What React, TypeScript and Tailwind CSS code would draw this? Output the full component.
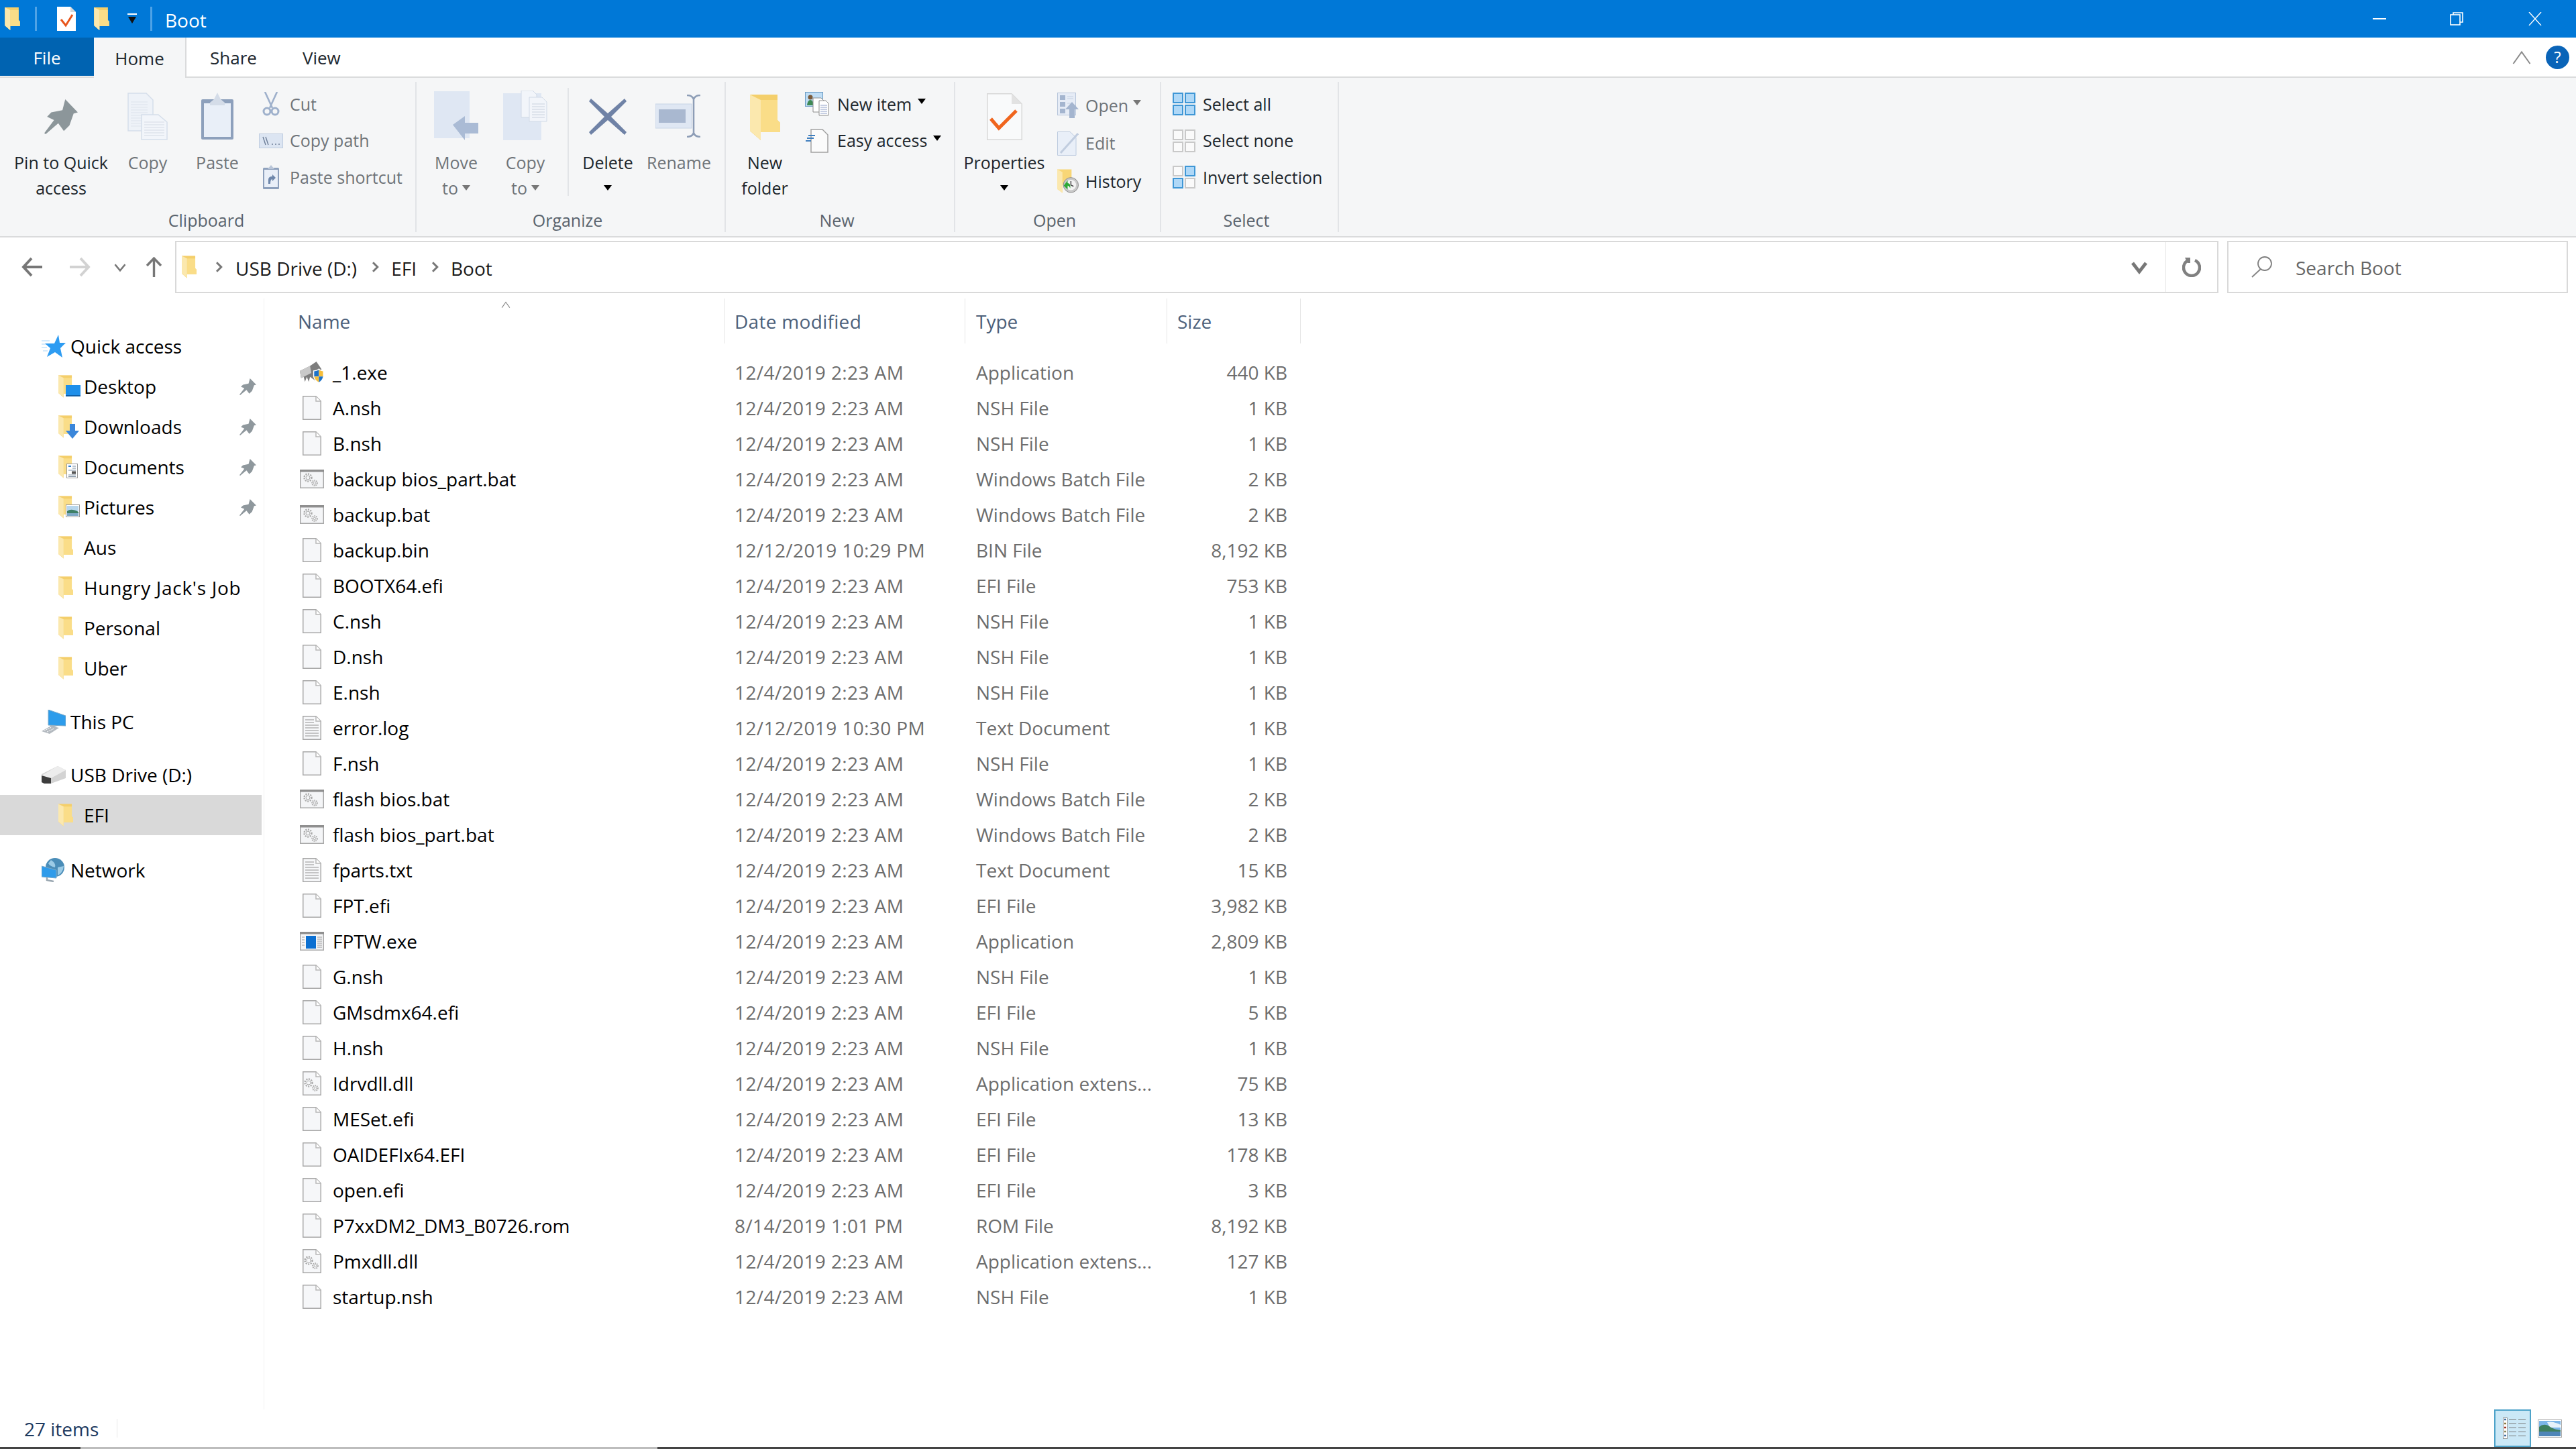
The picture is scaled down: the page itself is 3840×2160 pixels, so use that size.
import type { ReactNode } from 'react';

function Folder({ className }: { className: string }) {
  return (
    <svg viewBox="0 0 45 68" className={className}>
      <path d="M0 0H41V38L45 42V56H16V68L0 54Z" fill="#F8D676" />
      <path d="M16 8H41V38L45 42V56H16Z" fill="#FADD88" />
      <path d="M0 0H41V8H16V68L0 54Z" fill="#F1C964" opacity="0.6" />
      <path d="M0 0L16 8V68L0 54Z" fill="#FBE8AE" />
    </svg>
  );
}

function BlankDoc({ lines }: { lines?: boolean }) {
  return (
    <svg viewBox="0 0 28 36" className="w-[28px] h-[36px]">
      <path d="M.75.75H20L27.25 8V35.25H.75Z" fill="#F6F7F9" stroke="#A8A8A8" strokeWidth="1.5" />
      <path d="M20 1V8H27" fill="#FFFFFF" stroke="#B8B8B8" strokeWidth="1.5" />
      {lines && (
        <path d="M4 6H17M4 10H17M4 14H24M4 18H24M4 22H24M4 26H24M4 30H24" stroke="#B4B4B4" strokeWidth="1.3" />
      )}
    </svg>
  );
}

function Gears({ x, y }: { x: number; y: number }) {
  return (
    <g transform={`translate(${x} ${y})`} fill="none" stroke="#A9A9A9">
      <circle cx="7" cy="6" r="5.5" strokeWidth="2.4" strokeDasharray="2 1.6" />
      <circle cx="7" cy="6" r="3" strokeWidth="1" />
      <circle cx="17" cy="14" r="3.8" strokeWidth="2" strokeDasharray="1.6 1.2" />
      <circle cx="17" cy="14" r="1.8" strokeWidth="0.8" />
    </g>
  );
}

function BatIcon() {
  return (
    <svg viewBox="0 0 36 28" className="w-[36px] h-[28px]">
      <rect x=".75" y=".75" width="34.5" height="26.5" fill="#F4F5F7" stroke="#A8A8A8" strokeWidth="1.5" />
      <rect x="0" y="0" width="36" height="3.5" fill="#8F8F8F" />
      <Gears x={5} y={6} />
    </svg>
  );
}

function DllIcon() {
  return (
    <svg viewBox="0 0 28 36" className="w-[28px] h-[36px]">
      <path d="M.75.75H20L27.25 8V35.25H.75Z" fill="#F6F7F9" stroke="#A8A8A8" strokeWidth="1.5" />
      <path d="M20 1V8H27" fill="#FFFFFF" stroke="#B8B8B8" strokeWidth="1.5" />
      <Gears x={2} y={11} />
    </svg>
  );
}

function AppIcon() {
  return (
    <svg viewBox="0 0 36 28" className="w-[36px] h-[28px]">
      <rect x=".75" y=".75" width="34.5" height="26.5" fill="#F4F5F7" stroke="#A8A8A8" strokeWidth="1.5" />
      <rect x="0" y="0" width="36" height="3.5" fill="#8F8F8F" />
      <rect x="9" y="6" width="15" height="19" fill="#0B6FD1" />
      <path d="M3 8H7M3 12H7M3 16H7M3 20H7M26 8H33M26 11H33M26 14H33M26 17H33M26 20H33M26 23H33" stroke="#9A9A9A" strokeWidth="1.2" />
    </svg>
  );
}

function ExeIcon() {
  return (
    <svg viewBox="0 0 38 34" className="w-[38px] h-[34px]">
      <path d="M0 15L16 7L26 0L34 12L32 24L24 30L16 24L14 32L11 24L8 32L6 24L2 26Z" fill="#7D7D7D" />
      <path d="M0 15L16 7L18 18L8 23L2 26Z" fill="#C9C9C9" />
      <path d="M21 14Q27 14 30 11Q33 14 38 14V24Q36 31 30 34Q23 31 21 24Z" fill="#FFFFFF" />
      <path d="M22.5 15.5Q27 15 30 13V23.5H22.5Z" fill="#1C72C9" />
      <path d="M30 13Q33 15 36.5 15.5V23.5H30Z" fill="#F6BE3A" />
      <path d="M22.5 23.5H30V32.5Q24 30 22.5 23.5Z" fill="#F6BE3A" />
      <path d="M30 23.5H36.5Q35 30 30 32.5Z" fill="#1C72C9" />
    </svg>
  );
}

function PinIcon({ className, color }: { className: string; color: string }) {
  return (
    <svg viewBox="0 0 24 32" preserveAspectRatio="none" className={className}>
      <path d="M15 0L24 12L21 13L18 24L14 29L10 22L1 32L0 31L7 19L2 16L5 12L13 10Z" fill={color} />
    </svg>
  );
}

function Caret({ color = '#000000' }: { color?: string }) {
  return (
    <svg viewBox="0 0 12 8" className="w-[12px] h-[8px]">
      <path d="M0 0H12L6 8Z" fill={color} />
    </svg>
  );
}

function Chevron({ className, d, color, width }: { className: string; d: string; color: string; width: number }) {
  return (
    <svg viewBox="0 0 24 24" className={className} fill="none" stroke={color} strokeWidth={width}>
      <path d={d} />
    </svg>
  );
}

function CopyIcon() {
  return (
    <svg viewBox="0 0 60 71" className="w-[60px] h-[71px]">
      <path d="M1 1H28L38 11V57H1Z" fill="#EEF2F8" stroke="#D5DEEA" strokeWidth="1.5" />
      <path d="M5 14H30M5 18H30M5 22H30M5 26H30M5 30H30M5 34H30M5 38H30M5 42H22M5 46H22M5 50H22" stroke="#DDE3EC" />
      <path d="M21 33H46L59 44V70H21Z" fill="#F2F5FA" stroke="#D5DEEA" strokeWidth="1.5" />
      <path d="M25 44H55M25 48H55M25 52H55M25 56H55M25 60H55M25 64H55" stroke="#D5DBE5" />
    </svg>
  );
}

function PasteIcon() {
  return (
    <svg viewBox="0 0 50 72" className="w-[50px] h-[72px]">
      <rect x="1" y="11" width="48" height="60" rx="2" fill="#8DA0BC" />
      <rect x="5" y="17" width="40" height="50" fill="#E9EFF8" />
      <path d="M14 16L20 11L25 1L30 11L36 16V20H14Z" fill="#D4DCE8" />
    </svg>
  );
}

function CutIcon() {
  return (
    <svg viewBox="0 0 26 36" className="w-[26px] h-[36px]" fill="none" stroke="#9EB0CB">
      <path d="M4 0L15 24M22 0L11 24" strokeWidth="2.6" />
      <circle cx="7" cy="29" r="5" strokeWidth="3" />
      <circle cx="19" cy="29" r="5" strokeWidth="3" />
    </svg>
  );
}

function CopyPathIcon() {
  return (
    <svg viewBox="0 0 36 22" className="w-[36px] h-[22px]">
      <rect x=".5" y=".5" width="35" height="21" fill="#DCE5F2" stroke="#BFCDE0" />
      <path d="M6 5L10 17M10 5L14 17" stroke="#6E7F98" strokeWidth="1.4" />
      <path d="M19 16H21M24 16H26M29 16H31" stroke="#6E7F98" strokeWidth="1.6" />
    </svg>
  );
}

function PasteShortcutIcon() {
  return (
    <svg viewBox="0 0 26 36" className="w-[26px] h-[36px]">
      <rect x="1" y="4" width="24" height="32" rx="1.5" fill="#8DA0BC" />
      <rect x="3" y="7" width="20" height="26" fill="#E9EFF8" />
      <path d="M8 6L13 0L18 6Z" fill="#B9C5D8" />
      <path d="M9 28V22Q9 17 15 17V14L20 19L15 24V21Q12 21 12 28Z" fill="#6E87AB" />
    </svg>
  );
}

function MoveToIcon() {
  return (
    <svg viewBox="0 0 66 73" className="w-[66px] h-[73px]">
      <rect x="0" y="0" width="53" height="70" fill="#DFE7F3" />
      <path d="M28 50L46 37V47H66V63H46V73Z" fill="#AABBD5" />
    </svg>
  );
}

function CopyToIcon() {
  return (
    <svg viewBox="0 0 66 74" className="w-[66px] h-[74px]">
      <path d="M0 4H57V50L57 74H0Z" fill="#DFE7F3" />
      <path d="M27 0H44L50 6V40H27Z" fill="#F2F5FA" stroke="#D0D9E6" />
      <path d="M39 10H58L65 17V46H39Z" fill="#F2F5FA" stroke="#D0D9E6" />
      <path d="M43 20H62M43 24H62M43 28H62M43 32H62M43 36H62M43 40H62" stroke="#CAD2DE" />
    </svg>
  );
}

function DeleteIcon() {
  return (
    <svg viewBox="0 0 58 58" className="w-[58px] h-[58px]">
      <path d="M4 2L29 24L54 2L57 6L34 29L57 52L54 56L29 34L4 56L1 52L24 29L1 6Z" fill="#6F82A6" />
    </svg>
  );
}

function RenameIcon() {
  return (
    <svg viewBox="0 0 70 64" className="w-[70px] h-[64px]">
      <rect x="0" y="14" width="54" height="36" fill="#DFE7F3" stroke="#C8D4E6" />
      <rect x="5" y="22" width="40" height="20" fill="#A9B8D0" />
      <path d="M47 1Q55 1 57 7V57Q55 63 47 63M67 1Q59 1 57 7M57 57Q59 63 67 63" fill="none" stroke="#8D9DB6" strokeWidth="2.5" />
    </svg>
  );
}

function NewItemIcon() {
  return (
    <svg viewBox="0 0 36 36" className="w-[36px] h-[36px]">
      <rect x=".5" y=".5" width="26" height="21" fill="#BFDDF5" stroke="#6B9CC4" />
      <circle cx="8" cy="8" r="3.5" fill="#7A5B3B" />
      <path d="M3 20Q4 12 8 12Q12 12 13 20Z" fill="#3F8A55" />
      <path d="M12 9H24L28 13V30H12Z" fill="#FFFFFF" stroke="#8C8C8C" />
      <path d="M21 13H31L35 17V35H21Z" fill="#FFFFFF" stroke="#8C8C8C" />
      <path d="M23 20H33M23 23H33M23 26H33M23 29H33M23 32H33" stroke="#8FA0C8" />
    </svg>
  );
}

function EasyAccessIcon() {
  return (
    <svg viewBox="0 0 34 36" className="w-[34px] h-[36px]">
      <path d="M8 1H25L33 9V35H8Z" fill="#FBFBFB" stroke="#A2A2A2" strokeWidth="1.5" />
      <path d="M4 10H14M2 14H12M0 18H8" stroke="#3F7FBF" strokeWidth="2" />
    </svg>
  );
}

function PropertiesIcon() {
  return (
    <svg viewBox="0 0 53 70" className="w-[53px] h-[70px]">
      <path d="M.75.75H37L52.25 16V69.25H.75Z" fill="#F9FAFB" stroke="#D8D8D8" strokeWidth="1.5" />
      <path d="M37 1V16H52Z" fill="#E2E2E2" />
      <path d="M6 36L18 50L44 24" transform="translate(0 2)" fill="none" stroke="#F0651E" strokeWidth="5" />
    </svg>
  );
}

function OpenIcon() {
  return (
    <svg viewBox="0 0 32 38" className="w-[32px] h-[38px]">
      <rect x=".5" y=".5" width="27" height="33" fill="#E6ECF6" stroke="#B7C5DA" />
      <rect x="4" y="4" width="8" height="7" fill="#A4B5CF" />
      <rect x="4" y="14" width="8" height="7" fill="#A4B5CF" />
      <rect x="4" y="24" width="8" height="7" fill="#A4B5CF" />
      <path d="M15 6H24M15 9H24M15 16H20" stroke="#C4D0E2" />
      <path d="M22 14L32 25H26V38H18V25H12Z" fill="#A4B5CF" />
    </svg>
  );
}

function EditIcon() {
  return (
    <svg viewBox="0 0 32 36" className="w-[32px] h-[36px]">
      <path d="M.5.5H19L28 9V35.5H.5Z" fill="#E9EFF8" stroke="#BCCADF" />
      <path d="M5 32L31 3" stroke="#C1CDDF" strokeWidth="3" />
    </svg>
  );
}

function HistoryIcon() {
  return (
    <svg viewBox="0 0 33 36" className="w-[33px] h-[36px]">
      <Folderish />
      <circle cx="21" cy="24" r="11.5" fill="#C8C8C8" stroke="#8A8A8A" />
      <circle cx="21" cy="24" r="8" fill="#F2F2F2" />
      <path d="M21 18V24L25 26" fill="none" stroke="#444444" strokeWidth="1.5" />
      <path d="M10 25L16 17V21Q21 21 20 29Q18 25 16 25V31Z" fill="#2EA836" />
    </svg>
  );
}

function Folderish() {
  return (
    <>
      <path d="M0 0H22V24H8V36L0 30Z" fill="#F8D676" />
      <path d="M0 0L8 4V36L0 30Z" fill="#FBE8AE" />
    </>
  );
}

function SelectIcon({ on }: { on: boolean[] }) {
  const cells = [
    [0, 0],
    [18, 0],
    [0, 18],
    [18, 18],
  ];
  return (
    <svg viewBox="0 0 34 34" className="w-[34px] h-[34px]">
      {cells.map(([x, y], i) => (
        <rect
          key={i}
          x={x + 1}
          y={y + 1}
          width="14"
          height="14"
          fill={on[i] ? '#AFD8F7' : '#FAFAFA'}
          stroke={on[i] ? '#3F97D6' : '#C9C9C9'}
          strokeWidth="2"
        />
      ))}
    </svg>
  );
}

function StarIcon() {
  return (
    <svg viewBox="0 0 36 34" className="w-[36px] h-[34px]">
      <path d="M0 9H12M0 14H9M0 19H8M2 24H9" stroke="#A9D6FA" strokeWidth="1.2" />
      <path d="M25 0L27 12H36L28 20L31 34L20 26L8 33L13 20L5 13H19Z" fill="#2E9CF2" />
    </svg>
  );
}

function PcIcon() {
  return (
    <svg viewBox="0 0 36 36" className="w-[36px] h-[36px]">
      <path d="M10 0L36 9V24L10 23Z" fill="#2D9CEB" stroke="#7BA9C9" />
      <path d="M13 23V27L24 24Z" fill="#9FB0BD" />
      <path d="M0 32L14 24L26 27L12 36Z" fill="#B4BAC0" />
      <path d="M4 31L15 26M8 33L19 28" stroke="#FFFFFF" strokeDasharray="2 1" />
    </svg>
  );
}

function UsbIcon() {
  return (
    <svg viewBox="0 0 36 26" className="w-[36px] h-[26px]">
      <path d="M0 12L24 0L36 6V18L14 26H4L0 24Z" fill="#D3D3D3" />
      <path d="M0 14H14V26H4L0 24Z" fill="#3D3D3D" />
      <path d="M0 14L24 0L36 6L14 18Z" fill="#EDEDED" />
    </svg>
  );
}

function NetworkIcon() {
  return (
    <svg viewBox="0 0 36 36" className="w-[36px] h-[36px]">
      <circle cx="20" cy="14" r="14" fill="#4A8DB8" />
      <path d="M14 3Q22 8 20 14Q12 12 10 8ZM24 14L33 12Q32 22 24 26Z" fill="#9CCBE6" />
      <path d="M0 12L22 18V30L0 28Z" fill="#2E9BEA" stroke="#7BA9C9" />
      <path d="M8 29V33L18 35" fill="none" stroke="#9AA7B1" strokeWidth="2.5" />
    </svg>
  );
}

// folder with a small badge in the sidebar
function NavFolder({ badge }: { badge?: ReactNode }) {
  return (
    <div className="relative w-[34px] h-[36px]">
      <Folder className="w-[22px] h-[36px]" />
      {badge}
    </div>
  );
}

const desktopBadge = (
  <svg viewBox="0 0 22 17" className="absolute left-[11px] bottom-[3px] w-[22px] h-[17px]">
    <rect width="22" height="17" fill="#1E8FEA" />
    <rect y="15" width="22" height="2" fill="#0F5FA8" />
  </svg>
);
const downloadBadge = (
  <svg viewBox="0 0 20 22" className="absolute left-[11px] bottom-0 w-[20px] h-[22px]">
    <path d="M6 0H14V10H20L10 22L0 10H6Z" fill="#3A86DA" />
  </svg>
);
const documentBadge = (
  <svg viewBox="0 0 17 22" className="absolute left-[12px] bottom-[1px] w-[17px] h-[22px]">
    <rect x=".5" y=".5" width="16" height="21" fill="#FFFFFF" stroke="#9A9A9A" />
    <path d="M3 4H7" stroke="#2F7FCF" strokeWidth="2" />
    <path d="M9 4H14M9 7H14M3 10H14M3 17H14M3 19.5H14" stroke="#7A8CA0" />
    <rect x="8" y="11.5" width="6" height="4" fill="#555555" />
  </svg>
);
const pictureBadge = (
  <svg viewBox="0 0 21 19" className="absolute left-[11px] bottom-[3px] w-[21px] h-[19px]">
    <rect x=".5" y=".5" width="20" height="18" fill="#FFFFFF" stroke="#9A9A9A" />
    <rect x="2" y="2" width="17" height="8" fill="#B6D6EE" />
    <path d="M2 10Q8 5 19 11V15H2Z" fill="#3E7F66" />
    <rect x="2" y="13" width="17" height="4" fill="#7FA9C6" />
  </svg>
);

const navItems: { label: string; badge?: ReactNode; pinned?: boolean; wide?: boolean }[] = [
  { label: 'Desktop', badge: desktopBadge, pinned: true },
  { label: 'Downloads', badge: downloadBadge, pinned: true },
  { label: 'Documents', badge: documentBadge, pinned: true },
  { label: 'Pictures', badge: pictureBadge, pinned: true },
  { label: 'Aus' },
  { label: "Hungry Jack's Job", wide: true },
  { label: 'Personal' },
  { label: 'Uber' },
];

function NavRow({ label, badge, pinned, selected, wide }: { label: string; badge?: ReactNode; pinned?: boolean; selected?: boolean; wide?: boolean }) {
  return (
    <div className={`flex items-center h-[60px] pl-[87px] pr-[8px] gap-[4px] ${selected ? 'bg-[#D9D9D9]' : ''}`}>
      <NavFolder badge={badge} />
      <span className={wide ? 'tracking-[0.7px]' : ''}>{label}</span>
      {pinned && <PinIcon className="ml-auto w-[25px] h-[25px]" color="#8F989D" />}
    </div>
  );
}

function NavRoot({ icon, label, className = '' }: { icon: ReactNode; label: string; className?: string }) {
  return (
    <div className={`flex items-center h-[60px] ${className}`}>
      <div className="w-[105px] pl-[62px] flex items-center">{icon}</div>
      <span>{label}</span>
    </div>
  );
}

type Kind = 'blank' | 'text' | 'bat' | 'dll' | 'app' | 'exe';

const files: [string, Kind, string, string, string][] = [
  ['_1.exe', 'exe', '12/4/2019 2:23 AM', 'Application', '440 KB'],
  ['A.nsh', 'blank', '12/4/2019 2:23 AM', 'NSH File', '1 KB'],
  ['B.nsh', 'blank', '12/4/2019 2:23 AM', 'NSH File', '1 KB'],
  ['backup bios_part.bat', 'bat', '12/4/2019 2:23 AM', 'Windows Batch File', '2 KB'],
  ['backup.bat', 'bat', '12/4/2019 2:23 AM', 'Windows Batch File', '2 KB'],
  ['backup.bin', 'blank', '12/12/2019 10:29 PM', 'BIN File', '8,192 KB'],
  ['BOOTX64.efi', 'blank', '12/4/2019 2:23 AM', 'EFI File', '753 KB'],
  ['C.nsh', 'blank', '12/4/2019 2:23 AM', 'NSH File', '1 KB'],
  ['D.nsh', 'blank', '12/4/2019 2:23 AM', 'NSH File', '1 KB'],
  ['E.nsh', 'blank', '12/4/2019 2:23 AM', 'NSH File', '1 KB'],
  ['error.log', 'text', '12/12/2019 10:30 PM', 'Text Document', '1 KB'],
  ['F.nsh', 'blank', '12/4/2019 2:23 AM', 'NSH File', '1 KB'],
  ['flash bios.bat', 'bat', '12/4/2019 2:23 AM', 'Windows Batch File', '2 KB'],
  ['flash bios_part.bat', 'bat', '12/4/2019 2:23 AM', 'Windows Batch File', '2 KB'],
  ['fparts.txt', 'text', '12/4/2019 2:23 AM', 'Text Document', '15 KB'],
  ['FPT.efi', 'blank', '12/4/2019 2:23 AM', 'EFI File', '3,982 KB'],
  ['FPTW.exe', 'app', '12/4/2019 2:23 AM', 'Application', '2,809 KB'],
  ['G.nsh', 'blank', '12/4/2019 2:23 AM', 'NSH File', '1 KB'],
  ['GMsdmx64.efi', 'blank', '12/4/2019 2:23 AM', 'EFI File', '5 KB'],
  ['H.nsh', 'blank', '12/4/2019 2:23 AM', 'NSH File', '1 KB'],
  ['Idrvdll.dll', 'dll', '12/4/2019 2:23 AM', 'Application extens...', '75 KB'],
  ['MESet.efi', 'blank', '12/4/2019 2:23 AM', 'EFI File', '13 KB'],
  ['OAIDEFIx64.EFI', 'blank', '12/4/2019 2:23 AM', 'EFI File', '178 KB'],
  ['open.efi', 'blank', '12/4/2019 2:23 AM', 'EFI File', '3 KB'],
  ['P7xxDM2_DM3_B0726.rom', 'blank', '8/14/2019 1:01 PM', 'ROM File', '8,192 KB'],
  ['Pmxdll.dll', 'dll', '12/4/2019 2:23 AM', 'Application extens...', '127 KB'],
  ['startup.nsh', 'blank', '12/4/2019 2:23 AM', 'NSH File', '1 KB'],
];

function FileIcon({ kind }: { kind: Kind }) {
  if (kind === 'bat') return <BatIcon />;
  if (kind === 'app') return <AppIcon />;
  if (kind === 'dll') return <DllIcon />;
  if (kind === 'exe') return <ExeIcon />;
  return <BlankDoc lines={kind === 'text'} />;
}

function LargeButton({ icon, lines, width, disabled }: { icon: ReactNode; lines: ReactNode[]; width: string; disabled?: boolean }) {
  return (
    <div className={`flex flex-col items-center shrink-0 ${width} ${disabled ? 'text-[#6F7479]' : 'text-[#20262C]'}`}>
      <div className="h-[101px] pb-[14px] flex items-end justify-center">{icon}</div>
      {lines.map((line, i) => (
        <div key={i} className="h-[38px] leading-[38px] flex items-center gap-[6px] whitespace-nowrap">
          {line}
        </div>
      ))}
    </div>
  );
}

function SmallButton({ icon, label, caret, height, iconBox, gap, disabled }: { icon: ReactNode; label: string; caret?: string; height: string; iconBox: string; gap: string; disabled?: boolean }) {
  return (
    <div className={`flex items-center whitespace-nowrap ${height} ${gap} ${disabled ? 'text-[#6F7479]' : 'text-[#20262C]'}`}>
      <div className={`flex justify-center ${iconBox}`}>{icon}</div>
      <span>{label}</span>
      {caret && (
        <span className="ml-[-3px] mb-[8px]">
          <Caret color={caret} />
        </span>
      )}
    </div>
  );
}

function Group({ width, label, labelPad = 'pr-[9px]', children }: { width: string; label: string; labelPad?: string; children: ReactNode }) {
  return (
    <div className={`flex flex-col h-[224px] border-r-2 border-[#E2E4E7] shrink-0 ${width}`}>
      <div className="flex flex-1 items-start">{children}</div>
      <div className={`h-[36px] leading-[36px] text-center text-[#59636D] ${labelPad}`}>{label}</div>
    </div>
  );
}

export default function App() {
  return (
    <div className="w-[3840px] h-[2160px] flex flex-col overflow-hidden bg-white text-[28px] text-black font-['Open_Sans',sans-serif]">
      {/* title bar */}
      <div className="h-[56px] shrink-0 bg-[#0078D7] flex items-center text-white">
        <Folder className="ml-[7px] w-[23px] h-[34px]" />
        <div className="ml-[22px] w-[3px] h-[36px] bg-[#4FA3E6]" />
        <svg viewBox="0 0 28 36" className="ml-[30px] w-[28px] h-[36px]">
          <path d="M0 0H20L28 8V36H0Z" fill="#FFFFFF" />
          <path d="M20 0V8H28Z" fill="#D8D8D8" />
          <path d="M6 19L13 28L23 12" fill="none" stroke="#E8561C" strokeWidth="3" />
        </svg>
        <Folder className="ml-[27px] w-[23px] h-[34px]" />
        <svg viewBox="0 0 14 16" className="ml-[27px] w-[14px] h-[16px]">
          <rect width="14" height="2" fill="#FFFFFF" y="0" />
          <path d="M1 5H13L7 15Z" fill="#111111" />
        </svg>
        <div className="ml-[20px] w-[3px] h-[36px] bg-[#4FA3E6]" />
        <span className="ml-[19px] pt-[3px]">Boot</span>
        <div className="ml-auto flex items-center mr-[51px]">
          <div className="w-[20px] h-[2px] bg-white" />
          <svg viewBox="0 0 20 20" className="ml-[95px] w-[20px] h-[20px]" fill="none" stroke="#FFFFFF" strokeWidth="1.6">
            <rect x="1" y="4" width="14" height="15" />
            <path d="M5 4V1H19V15H15" />
          </svg>
          <svg viewBox="0 0 20 20" className="ml-[97px] w-[20px] h-[20px]" fill="none" stroke="#FFFFFF" strokeWidth="1.4">
            <path d="M1 0L19 20M19 0L1 20" />
          </svg>
        </div>
      </div>

      {/* tabs */}
      <div className="h-[60px] shrink-0 flex border-b-2 border-[#DADBDC] text-[26px] text-[#20262C]">
        <div className="w-[140px] h-[57px] bg-[#0063B1] text-white flex items-center justify-center pt-[3px]">File</div>
        <div className="w-[138px] h-[60px] bg-[#F5F6F7] border-r-2 border-[#DADBDC] flex items-center justify-center pt-[2px]">Home</div>
        <div className="ml-[35px] flex items-center pt-[2px]">Share</div>
        <div className="ml-[68px] flex items-center pt-[2px]">View</div>
        <div className="ml-auto flex items-center mr-[10px]">
          <Chevron className="w-[30px] h-[30px]" d="M2 20L12 6L22 20" color="#8A8A8A" width={1.6} />
          <div className="ml-[21px] w-[35px] h-[35px] rounded-full bg-[#0A64B8] flex items-center justify-center text-white text-[24px]">?</div>
        </div>
      </div>

      {/* ribbon */}
      <div className="h-[238px] shrink-0 bg-[#F5F6F7] border-b-2 border-[#DADBDC] pt-[6px] flex text-[25px]">
        <Group width="w-[621px]" label="Clipboard" labelPad="pr-[4px]">
          <div className="flex items-start pl-[11px]">
            <LargeButton width="w-[160px]" lines={['Pin to Quick', 'access']} icon={<div className="pb-[9px]"><PinIcon className="w-[50px] h-[52px]" color="#8C969A" /></div>} />
            <div className="ml-[14px]">
              <LargeButton disabled width="w-[70px]" lines={['Copy']} icon={<CopyIcon />} />
            </div>
            <div className="ml-[34px]">
              <LargeButton disabled width="w-[70px]" lines={['Paste']} icon={<PasteIcon />} />
            </div>
            <div className="ml-[27px] pt-[6px]">
              <SmallButton disabled height="h-[54.5px]" iconBox="w-[36px]" gap="gap-[10px]" icon={<CutIcon />} label="Cut" />
              <SmallButton disabled height="h-[54.5px]" iconBox="w-[36px]" gap="gap-[10px]" icon={<CopyPathIcon />} label="Copy path" />
              <SmallButton disabled height="h-[54.5px]" iconBox="w-[36px]" gap="gap-[10px]" icon={<PasteShortcutIcon />} label="Paste shortcut" />
            </div>
          </div>
        </Group>

        <Group width="w-[461px]" label="Organize">
          <div className="flex items-start pl-[19px]">
            <LargeButton disabled width="w-[80px]" icon={<MoveToIcon />} lines={['Move', <>to <Caret color="#777777" /></>]} />
            <div className="ml-[23px]">
              <LargeButton disabled width="w-[80px]" icon={<CopyToIcon />} lines={['Copy', <>to <Caret color="#777777" /></>]} />
            </div>
            <div className="ml-[23px] mt-[9px] w-[2px] h-[161px] bg-[#E2E4E7]" />
            <div className="ml-[13px]">
              <LargeButton width="w-[90px]" icon={<div className="pb-[6px]"><DeleteIcon /></div>} lines={['Delete', <Caret />]} />
            </div>
            <div className="ml-[11px]">
              <LargeButton disabled width="w-[100px]" icon={<div className="pb-[4px]"><RenameIcon /></div>} lines={['Rename']} />
            </div>
          </div>
        </Group>

        <Group width="w-[342px]" label="New">
          <div className="flex items-start pl-[18px]">
            <LargeButton width="w-[80px]" icon={<Folder className="w-[45px] h-[68px]" />} lines={['New', 'folder']} />
            <div className="ml-[20px] pt-[6px]">
              <SmallButton height="h-[54.5px]" iconBox="w-[36px]" gap="gap-[12px]" icon={<NewItemIcon />} label="New item" caret="#000000" />
              <SmallButton height="h-[54.5px]" iconBox="w-[36px]" gap="gap-[12px]" icon={<EasyAccessIcon />} label="Easy access" caret="#000000" />
            </div>
          </div>
        </Group>

        <Group width="w-[307px]" label="Open">
          <div className="flex items-start pl-[8px]">
            <LargeButton width="w-[130px]" icon={<PropertiesIcon />} lines={['Properties', <Caret />]} />
            <div className="ml-[14px] pt-[7px]">
              <SmallButton disabled height="h-[56.5px]" iconBox="w-[32px]" gap="gap-[10px]" icon={<OpenIcon />} label="Open" caret="#777777" />
              <SmallButton disabled height="h-[56.5px]" iconBox="w-[32px]" gap="gap-[10px]" icon={<EditIcon />} label="Edit" />
              <SmallButton height="h-[56.5px]" iconBox="w-[32px]" gap="gap-[10px]" icon={<HistoryIcon />} label="History" />
            </div>
          </div>
        </Group>

        <Group width="w-[265px]" label="Select">
          <div className="pl-[17px] pt-[6px]">
            <SmallButton height="h-[54.5px]" iconBox="w-[34px]" gap="gap-[11px]" icon={<SelectIcon on={[true, true, true, true]} />} label="Select all" />
            <SmallButton height="h-[54.5px]" iconBox="w-[34px]" gap="gap-[11px]" icon={<SelectIcon on={[false, false, false, false]} />} label="Select none" />
            <SmallButton height="h-[54.5px]" iconBox="w-[34px]" gap="gap-[11px]" icon={<SelectIcon on={[false, true, true, false]} />} label="Invert selection" />
          </div>
        </Group>
      </div>

      {/* address row */}
      <div className="h-[91px] shrink-0 flex items-start pt-[5px]">
        <div className="h-[78px] flex items-center pl-[32px]">
          <svg viewBox="0 0 31 30" className="w-[31px] h-[30px]" fill="none" stroke="#777777" strokeWidth="4">
            <path d="M31 15H3M15 2L3 15L15 28" />
          </svg>
          <svg viewBox="0 0 31 30" className="ml-[41px] w-[31px] h-[30px]" fill="none" stroke="#D2D2D2" strokeWidth="4">
            <path d="M0 15H28M16 2L28 15L16 28" />
          </svg>
          <Chevron className="ml-[35px] w-[18px] h-[18px]" d="M2 7L12 19L22 7" color="#777777" width={3.5} />
          <svg viewBox="0 0 23 30" className="ml-[30px] w-[23px] h-[30px]" fill="none" stroke="#777777" strokeWidth="3.4">
            <path d="M11.5 30V3M1 13L11.5 2L22 13" />
          </svg>
        </div>
        <div className="ml-[20px] w-[3046px] h-[78px] border-2 border-[#D9D9D9] flex items-center text-[#1A1A1A]">
          <Folder className="ml-[8px] w-[22px] h-[34px]" />
          <Chevron className="ml-[24px] w-[18px] h-[20px]" d="M8 3L17 12L8 21" color="#777777" width={4} />
          <span className="ml-[16px] pt-[3px]">USB Drive (D:)</span>
          <Chevron className="ml-[18px] w-[18px] h-[20px]" d="M8 3L17 12L8 21" color="#777777" width={4} />
          <span className="ml-[15px] pt-[3px]">EFI</span>
          <Chevron className="ml-[18px] w-[18px] h-[20px]" d="M8 3L17 12L8 21" color="#777777" width={4} />
          <span className="ml-[15px] pt-[3px]">Boot</span>
          <Chevron className="ml-auto mr-[27px] w-[24px] h-[24px]" d="M2 6L12 19L22 6" color="#777777" width={5} />
          <div className="w-[77px] h-full border-l border-[#E5E5E5] flex items-center justify-center">
            <svg viewBox="0 0 28 30" className="w-[28px] h-[30px]" fill="none" stroke="#808080" strokeWidth="4.5">
              <path d="M9 5A12 12 0 1 0 19 5" />
              <path d="M4 1H12V9H8Z" fill="#808080" stroke="none" />
            </svg>
          </div>
        </div>
        <div className="ml-[13px] w-[508px] h-[78px] border-2 border-[#D9D9D9] flex items-center text-[#666666]">
          <svg viewBox="0 0 31 32" className="ml-[34px] w-[31px] h-[32px]" fill="none" stroke="#808080" strokeWidth="1.8">
            <circle cx="20" cy="11" r="10" />
            <path d="M14 19L1 31" />
          </svg>
          <span className="ml-[35px] pt-[2px]">Search Boot</span>
        </div>
      </div>

      {/* body */}
      <div className="flex flex-1 min-h-0">
        <div className="w-[394px] shrink-0 pr-[3px] border-r border-[#F0F0F0] pt-[41px]">
          <NavRoot icon={<StarIcon />} label="Quick access" />
          {navItems.map((item) => (
            <NavRow key={item.label} {...item} />
          ))}
          <NavRoot className="mt-[20px]" icon={<PcIcon />} label="This PC" />
          <NavRoot className="mt-[19px]" icon={<UsbIcon />} label="USB Drive (D:)" />
          <NavRow label="EFI" selected />
          <NavRoot className="mt-[22px]" icon={<NetworkIcon />} label="Network" />
        </div>

        <div className="flex-1">
          <div className="relative grid grid-cols-[686px_359px_301px_199px] h-[67px] text-[#4C607A]">
            <div className="border-r border-[#E5E5E5] pl-[50px] flex items-center">Name</div>
            <div className="border-r border-[#E5E5E5] pl-[15px] flex items-center tracking-[0.3px]">Date modified</div>
            <div className="border-r border-[#E5E5E5] pl-[16px] flex items-center">Type</div>
            <div className="border-r border-[#E5E5E5] pl-[15px] flex items-center">Size</div>
            <Chevron className="absolute left-[351px] top-[2px] w-[18px] h-[14px]" d="M2 20L12 6L22 20" color="#8A8A8A" width={2} />
          </div>
          <div className="mt-[16px]">
            {files.map(([name, kind, date, type, size]) => (
              <div key={name} className="grid grid-cols-[686px_359px_301px_199px] h-[53px] items-center">
                <div className="flex items-center pl-[53px] gap-[13px]">
                  <div className="w-[36px] flex justify-center">
                    <FileIcon kind={kind} />
                  </div>
                  <span>{name}</span>
                </div>
                <div className="pl-[15px] text-[#6D6D6D] tracking-[0.4px]">{date}</div>
                <div className="pl-[16px] text-[#6D6D6D]">{type}</div>
                <div className="pr-[20px] text-right text-[#6D6D6D]">{size}</div>
              </div>
            ))}
          </div>
        </div>
      </div>

      {/* status bar */}
      <div className="h-[56px] shrink-0 flex items-center pl-[36px] text-[#1E3A5F]">
        <span className="pt-[2px]">27 items</span>
        <div className="ml-[27px] w-px h-[28px] bg-[#E8E8E8]" />
        <div className="ml-auto w-[55px] h-[56px] bg-[#CBE8F6] border-2 border-[#4EA3C9] flex items-center justify-end pr-[6px]">
          <svg viewBox="0 0 34 32" className="w-[34px] h-[32px]" fill="none">
            <rect x=".5" y=".5" width="6" height="31" fill="#FFFFFF" stroke="#9A9A9A" />
            <path d="M2 3H5" stroke="#3F6F9F" strokeWidth="2.5" />
            <path d="M2 9H5" stroke="#8A7A3F" strokeWidth="2.5" />
            <path d="M2 15H5" stroke="#A03020" strokeWidth="2.5" />
            <path d="M2 21H5" stroke="#8A8A5F" strokeWidth="2.5" />
            <path d="M2 27H5" stroke="#3F6F9F" strokeWidth="2.5" />
            <path d="M9 3.5H20M23 3.5H34M9 9.5H20M23 9.5H34M9 15.5H20M23 15.5H34M9 21.5H20M23 21.5H34M9 27.5H20M23 27.5H34" stroke="#777777" strokeWidth="1.2" />
          </svg>
        </div>
        <svg viewBox="0 0 36 27" className="ml-[10px] mr-[21px] w-[36px] h-[27px]">
          <rect x=".5" y=".5" width="35" height="26" fill="#FFFFFF" stroke="#A8A8A8" />
          <rect x="2" y="2" width="32" height="23" fill="#7CB5E8" />
          <path d="M14 4Q22 2 34 8V12H18Z" fill="#E6F1FA" />
          <path d="M2 11Q10 4 20 12Q28 16 34 16V19H2Z" fill="#3F7F5F" />
          <rect x="2" y="18" width="32" height="7" fill="#4F86B8" />
        </svg>
      </div>
      <div className="h-[3px] shrink-0 bg-[#444444] flex">
        <div className="ml-[120px] w-[860px] bg-[#BDBDBD]" />
      </div>
    </div>
  );
}
